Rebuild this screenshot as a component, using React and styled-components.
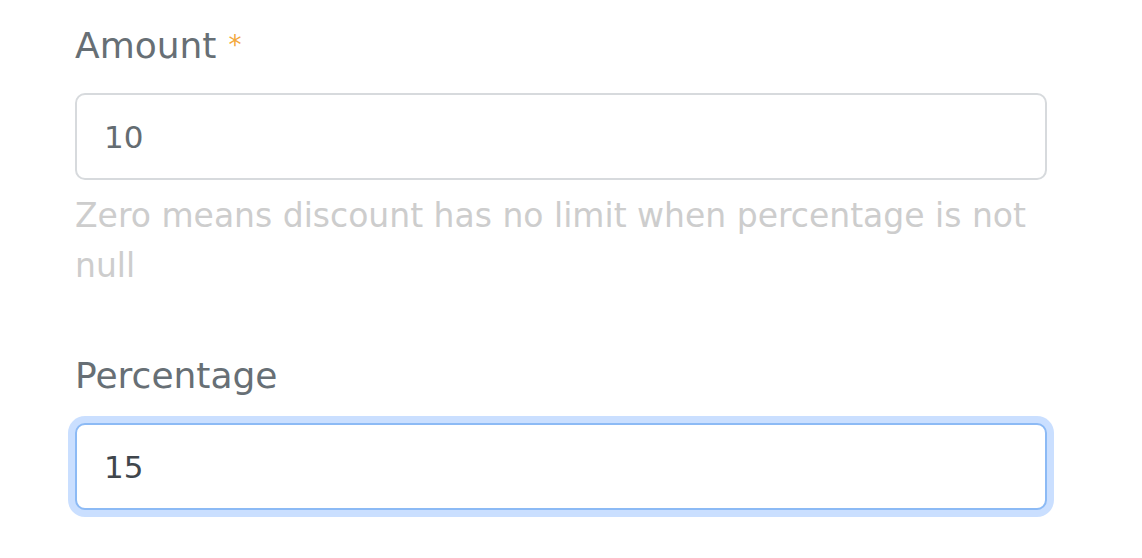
import styled, { createGlobalStyle } from "styled-components";

const GlobalStyle = createGlobalStyle`
  body {
    margin: 0;
    background: #ffffff;
    font-family: "DejaVu Sans", "Liberation Sans", sans-serif;
  }
`;

export const Page = styled.div`
  width: 1142px;
  height: 558px;
  padding: 21px 95px 0 75px;
  box-sizing: border-box;
  overflow: hidden;
`;

export const Field = styled.div`
  display: flex;
  flex-direction: column;
  margin-bottom: ${(props) => props.gap || 0}px;
`;

export const Label = styled.label`
  font-size: 36px;
  line-height: 50px;
  color: #676f75;
  margin-bottom: 22px;
  span {
    color: #f3a83b;
    font-size: 26px;
    margin-left: 12px;
    vertical-align: top;
    line-height: 48px;
  }
`;

export const Input = styled.input`
  box-sizing: border-box;
  width: 100%;
  height: 87px;
  padding: 0 27px;
  font-family: inherit;
  font-size: 31px;
  color: ${(props) => (props.focused ? "#40464c" : "#646c71")};
  background: #fff;
  border: 2px solid ${(props) => (props.focused ? "#8cbaf5" : "#d7dadd")};
  border-radius: 10px;
  outline: none;
  box-shadow: ${(props) =>
    props.focused ? "0 0 0 7px rgba(13, 110, 253, 0.22)" : "none"};
`;

export const Help = styled.div`
  margin-top: 11px;
  font-size: 33px;
  line-height: 50px;
  color: #cdcdcd;
`;

export default function App() {
  return (
    <>
      <GlobalStyle />
      <Page>
        <Field gap={60}>
          <Label>
            Amount<span>*</span>
          </Label>
          <Input defaultValue="10" readOnly />
          <Help>Zero means discount has no limit when percentage is not null</Help>
        </Field>
        <Field>
          <Label>Percentage</Label>
          <Input defaultValue="15" focused readOnly />
        </Field>
      </Page>
    </>
  );
}
